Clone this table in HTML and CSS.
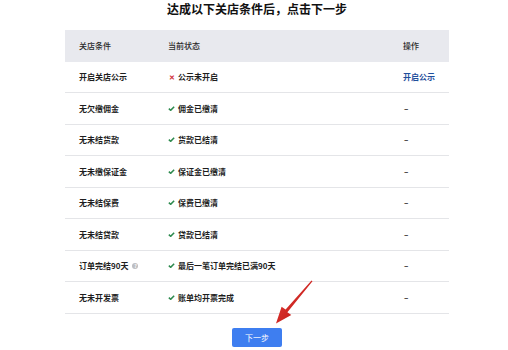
FILE: index.html
```html
<!DOCTYPE html>
<html lang="zh-CN">
<head>
  <meta charset="UTF-8" />
  <title>关店条件</title>
  <link rel="stylesheet" href="styles.css">
</head>
<body>
  <div class="page">
    <h1>达成以下关店条件后，点击下一步</h1>

    <div class="cond-table">
      <div class="row head">
        <div class="cell first">关店条件</div>
        <div class="cell">当前状态</div>
        <div class="cell">操作</div>
      </div>
      <div class="row">
        <div class="cell first">开启关店公示</div>
        <div class="cell"><span class="mark bad">✕</span>公示未开启</div>
        <div class="cell"><a class="action">开启公示</a></div>
      </div>
      <div class="row">
        <div class="cell first">无欠缴佣金</div>
        <div class="cell"><span class="mark ok"><svg viewBox="0 0 8 6"><path d="M0.8 3.2 L3 5.2 L7.2 0.8" /></svg></span>佣金已缴清</div>
        <div class="cell dash">–</div>
      </div>
      <div class="row">
        <div class="cell first">无未结货款</div>
        <div class="cell"><span class="mark ok"><svg viewBox="0 0 8 6"><path d="M0.8 3.2 L3 5.2 L7.2 0.8" /></svg></span>货款已结清</div>
        <div class="cell dash">–</div>
      </div>
      <div class="row">
        <div class="cell first">无未缴保证金</div>
        <div class="cell"><span class="mark ok"><svg viewBox="0 0 8 6"><path d="M0.8 3.2 L3 5.2 L7.2 0.8" /></svg></span>保证金已缴清</div>
        <div class="cell dash">–</div>
      </div>
      <div class="row">
        <div class="cell first">无未结保费</div>
        <div class="cell"><span class="mark ok"><svg viewBox="0 0 8 6"><path d="M0.8 3.2 L3 5.2 L7.2 0.8" /></svg></span>保费已缴清</div>
        <div class="cell dash">–</div>
      </div>
      <div class="row">
        <div class="cell first">无未结贷款</div>
        <div class="cell"><span class="mark ok"><svg viewBox="0 0 8 6"><path d="M0.8 3.2 L3 5.2 L7.2 0.8" /></svg></span>贷款已结清</div>
        <div class="cell dash">–</div>
      </div>
      <div class="row">
        <div class="cell first">订单完结90天<span class="info">?</span></div>
        <div class="cell"><span class="mark ok"><svg viewBox="0 0 8 6"><path d="M0.8 3.2 L3 5.2 L7.2 0.8" /></svg></span>最后一笔订单完结已满90天</div>
        <div class="cell dash">–</div>
      </div>
      <div class="row">
        <div class="cell first">无未开发票</div>
        <div class="cell"><span class="mark ok"><svg viewBox="0 0 8 6"><path d="M0.8 3.2 L3 5.2 L7.2 0.8" /></svg></span>账单均开票完成</div>
        <div class="cell dash">–</div>
      </div>
    </div>

    <button class="next-btn">下一步</button>
  </div>

  <!-- annotation arrow drawn over the screenshot -->
  <svg class="arrow" viewBox="0 0 508 350">
    <defs>
      <linearGradient id="red" x1="0" y1="0" x2="1" y2="1">
        <stop offset="0" stop-color="#e8403a" />
        <stop offset="1" stop-color="#b8120f" />
      </linearGradient>
    </defs>
    <polygon fill="url(#red)" points="312.5,281.3 311.5,280.6 285.6,309.6 281.6,306.8 276,323.5 291.3,315 287.4,312.2" />
  </svg>
</body>
</html>
```

FILE: styles.css
```css
body {
  margin: 0;
  background: #fff;
  font-family: "Noto Sans CJK SC", "Noto Sans", sans-serif;
  color: #1e1e1e;
}
.page {
  display: flex;
  flex-direction: column;
  align-items: center;
  padding-left: 6px;
}
h1 {
  margin: 0 0 12px 0;
  font-size: 12px;
  line-height: 18px;
  font-weight: 700;
  color: #111;
}
.cond-table {
  width: 384px;
}
.row {
  display: grid;
  grid-template-columns: 103px 235px 1fr;
  height: 31.5px;
  align-items: center;
  border-bottom: 1px solid #e4e5e8;
  box-sizing: border-box;
  font-size: 8px;
  font-weight: 700;
}
.row.head {
  background: #e8e9ee;
  border-bottom: none;
  font-weight: 500;
  color: #2a2a2a;
}
.cell {
  display: flex;
  align-items: center;
  white-space: nowrap;
}
.cell.first {
  padding-left: 14px;
}
.mark {
  width: 7px;
  margin-right: 3px;
  display: inline-flex;
  justify-content: center;
}
.mark.bad {
  color: #d0303a;
  font-size: 7px;
  font-weight: 900;
}
.mark.ok svg {
  width: 7px;
  height: 5px;
  fill: none;
  stroke: #2d8a4e;
  stroke-width: 1.8;
}
.action {
  color: #1f4f9c;
  font-weight: 700;
}
.dash {
  padding-left: 1px;
}
.info {
  display: inline-block;
  width: 6px;
  height: 6px;
  margin-left: 4px;
  border-radius: 50%;
  background: #bdbec2;
  color: #fff;
  font-size: 5px;
  line-height: 6px;
  text-align: center;
  overflow: hidden;
}
.next-btn {
  margin-top: 14px;
  width: 50px;
  height: 19px;
  border: none;
  border-radius: 2px;
  background: #3e7ef0;
  color: #fff;
  font-family: inherit;
  font-size: 8px;
  padding: 0;
}
.arrow {
  position: absolute;
  left: 0;
  top: 0;
  width: 508px;
  height: 350px;
  pointer-events: none;
}
```
